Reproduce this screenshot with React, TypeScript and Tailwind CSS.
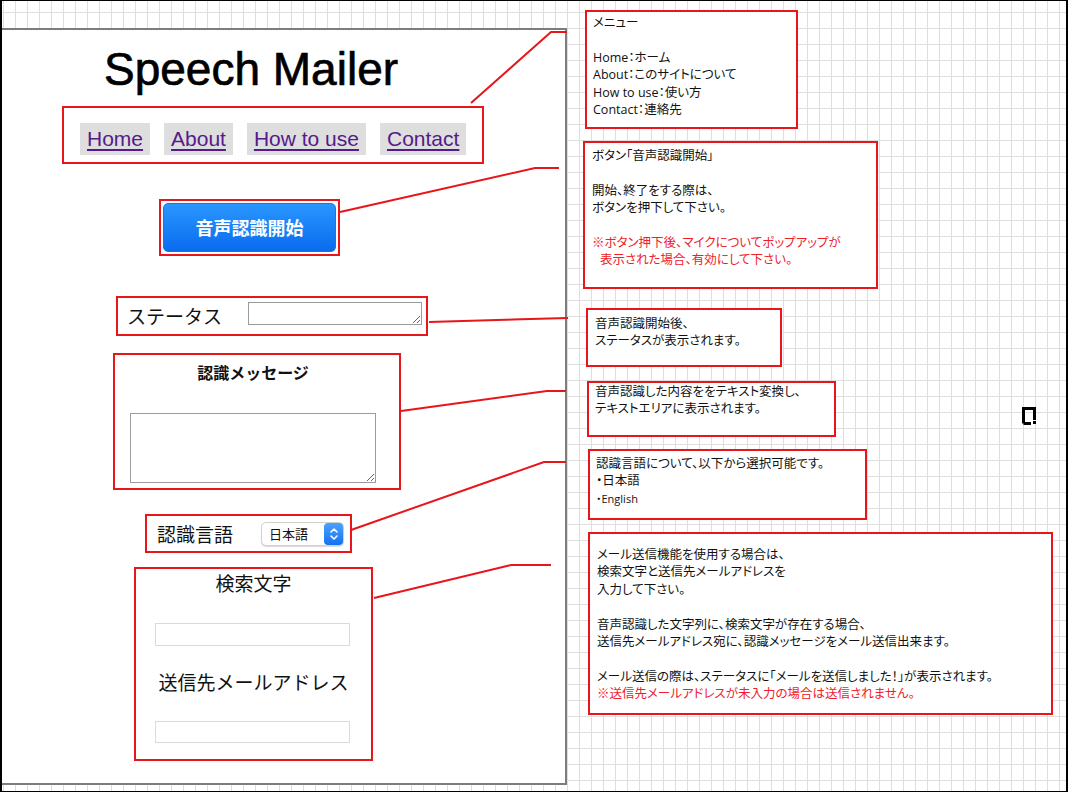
import React from "react";

const RED = "border-[#e8151b]";
const jp = "font-['Noto_Sans_CJK_JP',sans-serif]";

function Panel() {
  return (
    <div className="mt-[27px] w-[565px] h-[757px] shrink-0 bg-white border-t-2 border-r-2 border-b-2 border-[#7d7d7d] flex flex-col items-start">
      <div className="ml-[102px] mt-[16px] text-[46px] leading-[46px] text-black font-['Liberation_Sans',sans-serif] [-webkit-text-stroke:0.7px_#000]">
        Speech Mailer
      </div>

      <div className={`mt-[14px] ml-[60px] w-[422px] h-[58px] border-2 ${RED} flex gap-[14px] pl-[16px] pt-[15px] font-['Liberation_Sans',sans-serif]`}>
        {["Home", "About", "How to use", "Contact"].map((t) => (
          <a key={t} className="h-[32px] px-[7px] bg-[#dedede] text-[21px] leading-[32px] text-[#551a8b] underline underline-offset-[3px]">
            {t}
          </a>
        ))}
      </div>

      <div className={`mt-[35px] ml-[157px] w-[181px] h-[57px] border-2 ${RED} p-[2px]`}>
        <button className={`w-full h-full rounded-[5px] border border-[#1b74e4] bg-linear-to-b from-[#2a96ff] to-[#0a6bef] text-white font-bold text-[18px] ${jp}`}>
          音声認識開始
        </button>
      </div>

      <div className={`mt-[40px] ml-[114px] w-[312px] h-[40px] border-2 ${RED} flex items-start ${jp}`}>
        <span className="ml-[9px] mt-[5px] text-[19px] leading-[26px] text-[#111]">ステータス</span>
        <textarea className="ml-[26px] mt-[4px] w-[174px] h-[23px] border border-[#9b9b9b] bg-white" />
      </div>

      <div className={`mt-[17px] ml-[111px] w-[288px] h-[137px] border-2 ${RED} flex flex-col ${jp}`}>
        <div className="pt-[6px] pr-[8px] text-center font-bold text-[16px] leading-[22px] text-[#111]">認識メッセージ</div>
        <textarea className="self-start ml-[15px] mt-[30px] w-[246px] h-[70px] border border-[#9b9b9b] bg-white" />
      </div>

      <div className={`mt-[24px] ml-[143px] w-[207px] h-[39px] border-2 ${RED} flex items-center ${jp}`}>
        <span className="ml-[10px] text-[19px] leading-[26px] text-[#111]">認識言語</span>
        <div className="ml-[28px] w-[83px] h-[24px] rounded-[5px] border border-[#d0d0d0] bg-white shadow-[0_1px_1px_rgba(0,0,0,0.15)] flex items-center justify-between">
          <span className="pl-[7px] text-[13px] leading-[20px] text-[#111]">日本語</span>
          <span className="w-[19px] h-[22px] rounded-[4px] bg-linear-to-b from-[#4aa3ff] to-[#1470ee] flex items-center justify-center">
            <svg width="10" height="14" viewBox="0 0 10 14" fill="none" stroke="white" strokeWidth="1.6" strokeLinecap="round" strokeLinejoin="round">
              <path d="M2 5 L5 2 L8 5" />
              <path d="M2 9 L5 12 L8 9" />
            </svg>
          </span>
        </div>
      </div>

      <div className={`mt-[14px] ml-[132px] w-[239px] h-[194px] border-2 ${RED} flex flex-col ${jp}`}>
        <div className="pt-[1px] text-center text-[19px] leading-[26px] text-[#111]">検索文字</div>
        <input className="ml-[19px] mt-[27px] w-[195px] h-[23px] border border-[#dadada] bg-white" />
        <div className="mt-[23px] text-center text-[19px] leading-[26px] text-[#111]">送信先メールアドレス</div>
        <input className="ml-[19px] mt-[26px] w-[195px] h-[22px] border border-[#dadada] bg-white" />
      </div>
    </div>
  );
}

const note = `border-2 ${RED} bg-white text-[12.5px] leading-[17.4px] text-[#111] font-['Open_Sans','Noto_Sans_CJK_JP',sans-serif] [font-feature-settings:'palt']`;
const Blank = () => <div className="h-[17.4px]" />;

function Notes() {
  return (
    <div className="ml-[16px] flex flex-col items-start">
      <div className={`${note} mt-[9px] ml-[2px] w-[213px] h-[119px] pl-[6px] pt-[2px]`}>
        <div>メニュー</div>
        <Blank />
        <div>Home：ホーム</div>
        <div>About：このサイトについて</div>
        <div>How to use：使い方</div>
        <div>Contact：連絡先</div>
      </div>

      <div className={`${note} mt-[12px] w-[295px] h-[148px] pl-[7px] pt-[4px]`}>
        <div>ボタン「音声認識開始」</div>
        <Blank />
        <div>開始、終了をする際は、</div>
        <div>ボタンを押下して下さい。</div>
        <Blank />
        <div className="text-[#f0202a]">※ボタン押下後、マイクについてポップアップが</div>
        <div className="text-[#f0202a] pl-[8px]">表示された場合、有効にして下さい。</div>
      </div>

      <div className={`${note} mt-[19px] ml-[3px] w-[196px] h-[59px] pl-[7px] pt-[5px]`}>
        <div>音声認識開始後、</div>
        <div>ステータスが表示されます。</div>
      </div>

      <div className={`${note} mt-[14px] ml-[4px] w-[249px] h-[56px] pl-[6px] pt-[0px]`}>
        <div>音声認識した内容ををテキスト変換し、</div>
        <div>テキストエリアに表示されます。</div>
      </div>

      <div className={`${note} mt-[12px] ml-[5px] w-[279px] h-[71px] pl-[6px] pt-[4px]`}>
        <div>認識言語について、以下から選択可能です。</div>
        <div>・日本語</div>
        <div className="text-[11px]">・English</div>
      </div>

      <div className={`${note} mt-[12px] ml-[5px] w-[465px] h-[183px] pl-[7px] pt-[12px]`}>
        <div>メール送信機能を使用する場合は、</div>
        <div>検索文字と送信先メールアドレスを</div>
        <div>入力して下さい。</div>
        <Blank />
        <div>音声認識した文字列に、検索文字が存在する場合、</div>
        <div>送信先メールアドレス宛に、認識メッセージをメール送信出来ます。</div>
        <Blank />
        <div>メール送信の際は、ステータスに「メールを送信しました！」が表示されます。</div>
        <div className="text-[#f0202a]">※送信先メールアドレスが未入力の場合は送信されません。</div>
      </div>
    </div>
  );
}

function Connectors() {
  const lines = [
    "471,103 551,32 567,32",
    "340,212 535,168 559,168",
    "429,322 568,318",
    "401,411 547,391 566,391",
    "351,530 544,462 566,462",
    "374,598 511,565 551,565",
  ];
  return (
    <svg className="absolute -left-[2px] -top-px pointer-events-none" width="1068" height="792" viewBox="0 0 1068 792">
      {lines.map((p) => (
        <polyline key={p} points={p} fill="none" stroke="#e8151b" strokeWidth="2" />
      ))}
      <path d="M1023.5 423.5 V408.5 H1034.5 V420" fill="none" stroke="#000" strokeWidth="3" />
      <path d="M1023.5 423.5 H1031" fill="none" stroke="#000" strokeWidth="3" />
      <rect x="1033" y="421" width="3" height="3" fill="#000" />
    </svg>
  );
}

export default function App() {
  return (
    <div className="relative w-[1068px] h-[792px] overflow-hidden border-t border-b border-l-2 border-r-2 border-black bg-white bg-[linear-gradient(to_right,#dedede_1px,transparent_1px),linear-gradient(to_bottom,#dedede_1px,transparent_1px)] bg-[size:12px_16px] bg-[position:1px_11px] flex items-start">
      <Panel />
      <Notes />
      <Connectors />
    </div>
  );
}
